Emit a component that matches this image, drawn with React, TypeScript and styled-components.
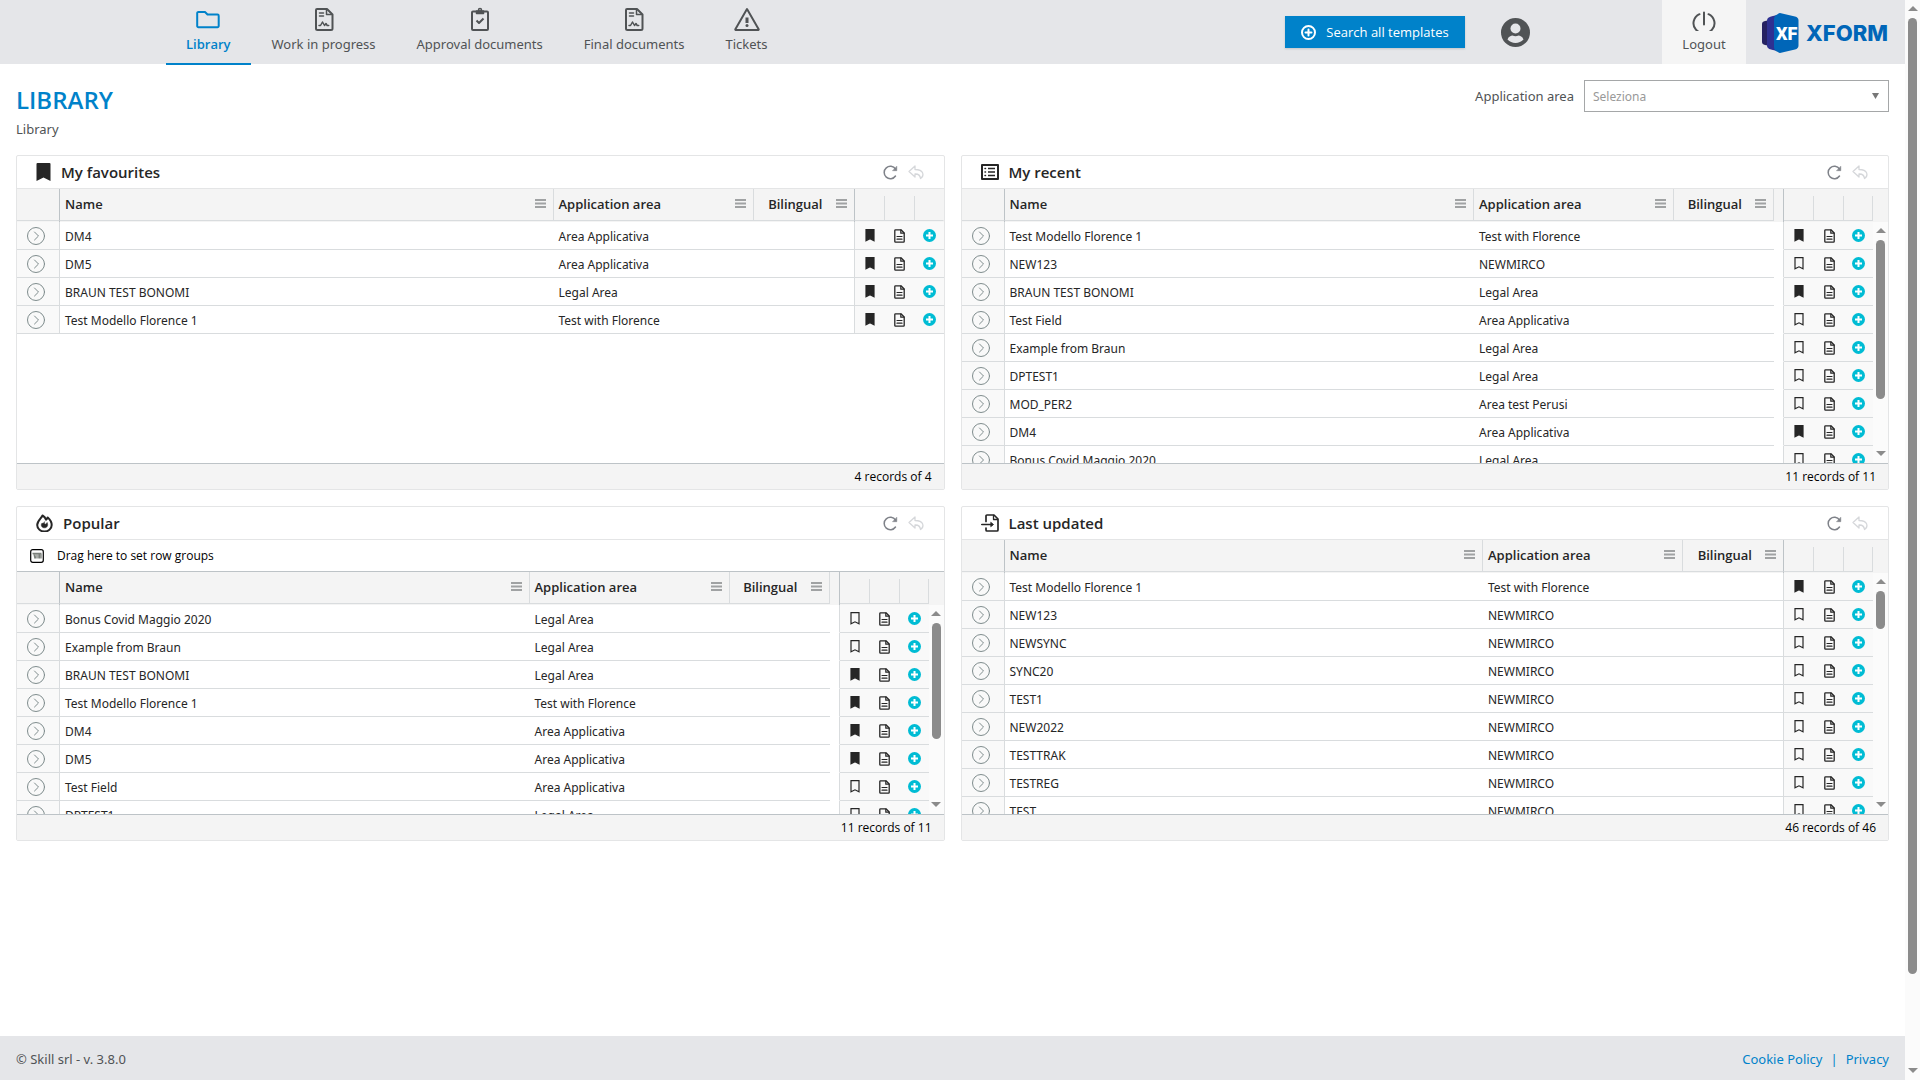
import React from "react";
import styled, { createGlobalStyle, css } from "styled-components";

const color = {
  brand: "#0082ca",
  bar: "#e5e6e9",
  text: "#262626",
  muted: "#505355",
  line: "#d9dcde",
  strong: "#bdc3c7",
  panel: "#e4e5e6",
  head: "#f4f4f4",
  pinned: "#f9f9f9",
  cyan: "#00bcd4",
  thumb: "#8b8b8b",
};

const font = {
  body: '"Noto Sans", "Open Sans", sans-serif',
  strong: '"Open Sans", "Noto Sans", sans-serif',
};

const GlobalStyle = createGlobalStyle`
  * { box-sizing: border-box; }
  body {
    margin: 0;
    background: #fff;
    color: ${color.text};
    font-family: ${font.body};
    font-size: 13px;
  }
  button, select { font: inherit; }
  svg { display: block; flex: none; }
`;

const Shell = styled.div`
  display: flex;
  min-height: 100vh;
`;

const Page = styled.div`
  flex: 1;
  min-width: 0;
  display: flex;
  flex-direction: column;
`;

const TopBar = styled.header`
  display: flex;
  height: 64px;
  padding-left: 166px;
  background: ${color.bar};
`;

const Nav = styled.nav`
  display: flex;
  gap: 1px;
`;

const BarItem = css`
  display: flex;
  flex-direction: column;
  align-items: center;
  gap: 3px;
  padding: 7px 20px 0;
  line-height: 20px;
  color: ${color.muted};
  text-decoration: none;
  white-space: nowrap;
`;

const NavLink = styled.a<{ $active?: boolean }>`
  ${BarItem}
  height: 65px;
  border-bottom: 2px solid transparent;
  ${(p) =>
    p.$active &&
    css`
      color: ${color.brand};
      font-family: ${font.strong};
      font-weight: 600;
      border-color: ${color.brand};
    `}
`;

const Tools = styled.div`
  display: flex;
  align-items: center;
  margin-left: auto;
`;

const SearchButton = styled.button`
  display: flex;
  align-items: center;
  justify-content: center;
  gap: 10px;
  width: 180px;
  height: 32px;
  padding: 0;
  border: 0;
  color: #fff;
  font-family: ${font.strong};
  background: ${color.brand};
  box-shadow: 0 1px 2px rgba(0, 0, 0, 0.15);
`;

const UserButton = styled.button`
  margin: 0 132px 0 36px;
  padding: 0;
  border: 0;
  background: none;
  color: ${color.muted};
`;

const LogoutButton = styled.button`
  ${BarItem}
  width: 84px;
  height: 64px;
  border: 0;
  background: #f5f5f5;
`;

const Brand = styled.a`
  display: flex;
  align-items: center;
  gap: 7px;
  padding: 2px 16px 0;
`;

const Main = styled.main`
  flex: 1;
  padding: 16px;
`;

const PageHead = styled.div`
  display: flex;
  justify-content: space-between;
  align-items: flex-start;
  height: 75px;
`;

const Title = styled.h1`
  margin: 2px 0 0;
  font-family: ${font.strong};
  font-size: 24px;
  line-height: 36px;
  font-weight: 600;
  color: ${color.brand};
`;

const Crumb = styled.div`
  margin-top: 1px;
  line-height: 20px;
  color: ${color.muted};
`;

const Filter = styled.div`
  display: flex;
  align-items: center;
  gap: 10px;
  color: ${color.muted};
`;

const SelectWrap = styled.div`
  display: grid;
  align-items: center;
  > * { grid-area: 1 / 1; }
  > svg { justify-self: end; margin-right: 10px; pointer-events: none; }
`;

const Select = styled.select`
  width: 305px;
  height: 32px;
  padding: 0 8px;
  border: 1px solid #a5a7a8;
  border-radius: 0;
  appearance: none;
  background: #fff;
  color: #999;
  font-size: 12px;
`;

const Panels = styled.div`
  display: grid;
  grid-template-columns: repeat(2, minmax(0, 1fr));
  gap: 16px;
`;

const Panel = styled.section`
  display: flex;
  flex-direction: column;
  height: 335px;
  border: 1px solid ${color.panel};
  border-radius: 2px;
`;

const PanelHead = styled.div`
  display: flex;
  align-items: center;
  gap: 10px;
  height: 33px;
  padding: 0 19px;
  border-bottom: 1px solid ${color.panel};
`;

const PanelTitle = styled.h2`
  flex: 1;
  margin: 0;
  font-family: ${font.strong};
  font-size: 15px;
  line-height: 20px;
  font-weight: 600;
`;

const IconButton = styled.button`
  display: flex;
  align-items: center;
  justify-content: center;
  padding: 0;
  border: 0;
  background: none;
  color: #7f8289;
  &:disabled { color: #d5d7da; }
`;

const GroupBar = styled.div`
  display: flex;
  align-items: center;
  gap: 13px;
  height: 32px;
  padding: 0 13px;
  border-bottom: 1px solid ${color.strong};
  color: #000;
  font-family: ${font.strong};
  font-size: 12px;
`;

const GridArea = styled.div`
  flex: 1;
  min-height: 0;
  display: flex;
  overflow: hidden;
`;

const Viewport = styled.div`
  flex: 1;
  min-width: 0;
  overflow: hidden;
`;

const Table = styled.table`
  width: 100%;
  table-layout: fixed;
  border-collapse: separate;
  border-spacing: 0;
  font-size: 12px;
`;

const HeadRow = styled.tr`
  height: 33px;
  background: ${color.head};
`;

const Th = styled.th<{ $pinned?: boolean }>`
  padding: 0;
  font-family: ${font.strong};
  font-weight: 600;
  font-size: 13px;
  line-height: 18px;
  text-align: left;
  vertical-align: top;
  border-right: 1px solid ${(p) => (p.$pinned ? color.strong : "transparent")};
`;

const HeadCell = styled.div<{ $end?: boolean; $open?: boolean }>`
  display: flex;
  align-items: flex-start;
  justify-content: ${(p) => (p.$end ? "flex-end" : "space-between")};
  gap: 13px;
  height: 32px;
  margin-right: -1px;
  padding: 6px 7px 0 5px;
  border-bottom: 1px solid ${color.line};
  border-right: 1px solid ${(p) => (p.$open ? "transparent" : color.line)};
  > svg { margin-top: 4px; }
`;

const ActionHead = styled.div`
  height: 32px;
  margin-right: -1px;
  padding-top: 7px;
  border-bottom: 1px solid ${color.line};
  &::after {
    content: "";
    display: block;
    height: 24px;
    border-right: 1px solid ${color.line};
  }
`;

const Td = styled.td<{ $pinned?: boolean; $edge?: boolean; $blank?: boolean }>`
  height: 28px;
  padding: 0 0 0 5px;
  line-height: 20px;
  white-space: nowrap;
  border-bottom: 1px solid ${(p) => (p.$blank ? "transparent" : color.line)};
  border-right: ${(p) => (p.$edge ? `1px solid ${color.line}` : "0")};
  background: ${(p) => (p.$pinned ? color.pinned : "#fff")};
`;

const TextCell = styled(Td)`
  padding-top: 2px;
`;

const ActionCell = styled(Td)`
  padding: 0;
`;

const CellButton = styled(IconButton)`
  margin: 0 auto;
  color: ${color.text};
`;

const Expand = styled(CellButton)`
  margin: 0 0 0 5px;
  color: #7f8c8d;
`;

const Status = styled.div`
  height: 26px;
  padding: 0 12px;
  line-height: 25px;
  font-family: ${font.strong};
  font-size: 12px;
  text-align: right;
  color: #000;
  border-top: 1px solid ${color.strong};
  background: ${color.head};
`;

const ScrollColumn = styled.div<{ $inPanel?: boolean }>`
  flex: none;
  display: flex;
  flex-direction: column;
  width: 15px;
  padding-top: ${(p) => (p.$inPanel ? "33px" : "0")};
  background: ${color.head};
`;

const Track = styled.div`
  flex: 1;
  display: flex;
  flex-direction: column;
  align-items: center;
  padding: 6px 0 7px;
  background: #fbfbfb;
  > svg:last-child { margin-top: auto; }
`;

const Thumb = styled.div<{ $size: string }>`
  width: 9px;
  height: ${(p) => p.$size};
  margin-top: 7px;
  border-radius: 5px;
  background: ${color.thumb};
`;

const Footer = styled.footer`
  display: flex;
  align-items: center;
  justify-content: space-between;
  height: 44px;
  padding: 2px 16px 0;
  background: ${color.bar};
  color: ${color.muted};
`;

const FooterLinks = styled.div`
  display: flex;
  gap: 8px;
  color: ${color.brand};
  a { color: inherit; text-decoration: none; }
`;

/* ---------- icons ---------- */

type IconProps = { w: number; h: number; children: React.ReactNode; sw?: number };

const Icon = ({ w, h, sw = 2, children }: IconProps) => (
  <svg
    width={w}
    height={h}
    viewBox={`0 0 ${w} ${h}`}
    fill="none"
    stroke="currentColor"
    strokeWidth={sw}
    strokeLinecap="round"
    strokeLinejoin="round"
    aria-hidden="true"
  >
    {children}
  </svg>
);

const FolderIcon = () => (
  <Icon w={24} h={24}>
    <path d="M2.500 5H9l2.500 2.500H21.500a1.200 1.200 0 0 1 1.200 1.200V19a1.200 1.200 0 0 1-1.200 1.200h-19A1.200 1.200 0 0 1 1.200 19V6.200A1.200 1.200 0 0 1 2.500 5z" />
  </Icon>
);
const DraftIcon = () => (
  <Icon w={24} h={24}>
    <path d="M5 2h10l5.500 5.500v14a1.500 1.500 0 0 1-1.500 1.500H5.500a1.500 1.500 0 0 1-1.500-1.500V3a1 1 0 0 1 1-1z" />
    <path d="M14.500 2.500V7.500H19.500M7.500 6h4M7.500 9h4" strokeWidth={1.500} />
    <path d="M7 18.500h1.500l2-3.500 2 3.500 1.500-2 1.200 2h1.500" strokeWidth={1.500} />
  </Icon>
);
const ClipboardIcon = () => (
  <Icon w={24} h={24}>
    <rect x="4" y="4.500" width="16" height="18.500" rx="1" />
    <path d="M8.500 4h7v2.500h-7z" fill="currentColor" strokeWidth={1.500} />
    <circle cx="12" cy="3" r="1.500" strokeWidth={1.500} />
    <path d="M8.500 13.500l2.500 2.500 4.500-4.500" strokeLinecap="butt" />
  </Icon>
);
const AlertIcon = () => (
  <Icon w={26} h={24}>
    <path d="M13 2l11.500 20a.6.600 0 0 1-.6 1H2.100a.6.600 0 0 1-.6-1z" />
    <path d="M13 10.500v5.500" strokeWidth={3} strokeLinecap="butt" />
    <path d="M13 18.500v.1" strokeWidth={3} />
  </Icon>
);
const PowerIcon = () => (
  <Icon w={24} h={24}>
    <path d="M12 4.500v12M7.500 6.200a10.500 10 0 1 0 9 0" transform="translate(0 1)" />
  </Icon>
);
const PlusRingIcon = () => (
  <Icon w={15} h={15} sw={2}>
    <circle cx="7.500" cy="7.500" r="6.500" />
    <path d="M7.500 4.500v6M4.500 7.500h6" />
  </Icon>
);
const UserIcon = () => (
  <svg width="29" height="29" viewBox="0 0 29 29" aria-hidden="true">
    <circle cx="14.500" cy="14.500" r="14.500" fill="currentColor" />
    <circle cx="14.500" cy="10.500" r="5" fill={color.bar} />
    <path d="M6.500 21.500c1-3 3.500-4 5-4 1 .5 2 .7 3 .7s2-.2 3-.7c1.500 0 4 1 5 4a11 11 0 0 1-16 0z" fill={color.bar} />
  </svg>
);
const Logo = () => (
  <>
    <svg width="37" height="40" viewBox="0 0 37 40" aria-hidden="true">
      <path d="M3 8l10-2v28L3 32q-3-.6-3-3V11q0-2.400 3-3z" fill="#262262" />
      <path d="M9 3.500L19 1v38L9 36.500q-4-1-4-4v-25q0-3 4-4z" fill="#2e3192" />
      <path d="M16 1q1-1.200 3-.8l14 3.300q3.500.8 3.500 4v25q0 3.200-3.500 4l-14 3.300q-2 .4-3-.8-4-1.500-4-5V6q0-3.500 4-5z" fill="#0066b8" />
      <text x="14" y="27" fontFamily="Roboto, sans-serif" fontWeight="900" fontSize="18" fill="#fff">XF</text>
    </svg>
    <svg width="83" height="24" viewBox="0 0 83 24" role="img" aria-label="XFORM">
      <text x="0" y="20" fontFamily="Inter, sans-serif" fontWeight="800" fontSize="22" fill="#0066b8">XFORM</text>
    </svg>
  </>
);
const Caret = () => (
  <svg width="7" height="6" viewBox="0 0 7 6" aria-hidden="true"><path d="M0 0h7L3.500 6z" fill="#777" /></svg>
);
const ArrowUp = () => (
  <svg width="10" height="5" viewBox="0 0 10 5" aria-hidden="true"><path d="M5 0l5 5H0z" fill={color.thumb} /></svg>
);
const ArrowDown = () => (
  <svg width="10" height="5" viewBox="0 0 10 5" aria-hidden="true"><path d="M5 5l5-5H0z" fill={color.thumb} /></svg>
);

const TitleBookmark = () => (
  <svg width="15" height="18" viewBox="0 0 15 18" aria-hidden="true"><path d="M1.500 0h12a1 1 0 0 1 1 1v17l-7-3.500L.500 18V1a1 1 0 0 1 1-1z" fill="currentColor" /></svg>
);
const TitleList = () => (
  <Icon w={18} h={16} sw={2}>
    <path d="M1 1h16v14H1z" />
    <path d="M4 4.500h.5M4 8h.5M4 11.500h.5" strokeWidth={1.500} />
    <path d="M7 4.500h7M7 8h7M7 11.500h7" strokeWidth={1.500} strokeLinecap="butt" />
  </Icon>
);
const TitleFire = () => (
  <Icon w={17} h={18} sw={2}>
    <path d="M6.500 1.500C5 4.500 1.200 7 1.200 11a7.200 6.500 0 0 0 14.500 0c0-3-1.700-5.500-4-7.500-.5 1-1 1.700-1.700 2.200C9.500 4 8.500 2.500 6.500 1.500z" />
    <path d="M8.500 8c-.3 1-.2 1.800.6 2.300.9-.2 1.500-.8 2-1.800 1.300 2.800.3 5.300-2.600 5.300-3.200 0-4-3-2.400-4.800.6.700 1.300.6 2.400-1z" fill="currentColor" strokeWidth={0.500} />
  </Icon>
);
const TitleImport = () => (
  <Icon w={18} h={18} sw={1.700}>
    <path d="M5 7.500V2q0-1 1-1h7l4 4v11q0 1-1 1H6q-1 0-1-1v-2" />
    <path d="M12.500 1.500V5.500H16.500" strokeWidth={1.300} />
    <path d="M.800 10.500h10.500" strokeWidth={1.700} />
    <path d="M10 8.500l2.500 2-2.500 2z" fill="currentColor" strokeWidth={0.800} />
  </Icon>
);
const RefreshIcon = () => (
  <Icon w={15} h={15} sw={1.500}>
    <path d="M12.500 4A6.200 6.200 0 1 0 12.500 11" />
    <path d="M13.800 1.500v4.200H9.800z" fill="currentColor" strokeWidth={0.500} />
  </Icon>
);
const UndoIcon = () => (
  <Icon w={17} h={15} sw={1.300}>
    <path d="M7 1L1 6.500 7 12V9c3-.2 5 .5 5.500 4.500 4-3 3.500-9-5.500-9z" />
  </Icon>
);
const GroupIcon = () => (
  <Icon w={14} h={14} sw={1.200}>
    <rect x=".7" y=".7" width="12.600" height="12.600" rx="2" />
    <path d="M2.500 4.500h9M4 5l1 4.500M6 5v4.500M8 5v4.500M9.500 5v4.500M11 5v4.500" stroke="#7b807b" strokeWidth={1.300} strokeLinecap="butt" />
  </Icon>
);
const MenuIcon = () => (
  <svg width="11" height="9" viewBox="0 0 11 9" aria-hidden="true">
    <path d="M0 0h11v2H0zM0 3.500h11v2H0zM0 7h11v2H0z" fill="#a0a2a3" />
  </svg>
);
const ExpandIcon = () => (
  <Icon w={18} h={18} sw={1}>
    <circle cx="9" cy="9" r="8.500" />
    <path d="M7.500 5l4 4-4 4" />
  </Icon>
);
const BookmarkIcon = ({ filled }: { filled?: boolean }) => (
  <svg width="10" height="13" viewBox="0 0 10 13" aria-hidden="true">
    <path
      d="M1 .7h8v11.100L5 9.800l-4 2z"
      fill={filled ? "currentColor" : "none"}
      stroke="currentColor"
      strokeWidth={1.200}
    />
  </svg>
);
const DocIcon = () => (
  <Icon w={11} h={14} sw={1.300}>
    <path d="M1.500.8H7l3.200 3.200v8.500q0 .7-.7.7h-8q-.7 0-.7-.7v-11q0-.7.7-.7z" />
    <path d="M6.800 1v3.200H10M3 7.500h5M3 10.200h5" strokeWidth={1.200} />
  </Icon>
);
const AddIcon = () => (
  <svg width="13" height="13" viewBox="0 0 13 13" aria-hidden="true">
    <circle cx="6.500" cy="6.500" r="6.500" fill={color.cyan} />
    <path d="M6.500 3v7M3 6.500h7" stroke="#fff" strokeWidth="2" />
  </svg>
);

/* ---------- data ---------- */

type Row = [name: string, area: string, favourite?: boolean];

const favourites: Row[] = [
  ["DM4", "Area Applicativa", true],
  ["DM5", "Area Applicativa", true],
  ["BRAUN TEST BONOMI", "Legal Area", true],
  ["Test Modello Florence 1", "Test with Florence", true],
];
const recent: Row[] = [
  ["Test Modello Florence 1", "Test with Florence", true],
  ["NEW123", "NEWMIRCO"],
  ["BRAUN TEST BONOMI", "Legal Area", true],
  ["Test Field", "Area Applicativa"],
  ["Example from Braun", "Legal Area"],
  ["DPTEST1", "Legal Area"],
  ["MOD_PER2", "Area test Perusi"],
  ["DM4", "Area Applicativa", true],
  ["Bonus Covid Maggio 2020", "Legal Area"],
];
const popular: Row[] = [
  ["Bonus Covid Maggio 2020", "Legal Area"],
  ["Example from Braun", "Legal Area"],
  ["BRAUN TEST BONOMI", "Legal Area", true],
  ["Test Modello Florence 1", "Test with Florence", true],
  ["DM4", "Area Applicativa", true],
  ["DM5", "Area Applicativa", true],
  ["Test Field", "Area Applicativa"],
  ["DPTEST1", "Legal Area"],
];
const updated: Row[] = [
  ["Test Modello Florence 1", "Test with Florence", true],
  ["NEW123", "NEWMIRCO"],
  ["NEWSYNC", "NEWMIRCO"],
  ["SYNC20", "NEWMIRCO"],
  ["TEST1", "NEWMIRCO"],
  ["NEW2022", "NEWMIRCO"],
  ["TESTTRAK", "NEWMIRCO"],
  ["TESTREG", "NEWMIRCO"],
  ["TEST", "NEWMIRCO"],
];

const navItems = [
  { label: "Library", icon: <FolderIcon />, active: true },
  { label: "Work in progress", icon: <DraftIcon /> },
  { label: "Approval documents", icon: <ClipboardIcon /> },
  { label: "Final documents", icon: <DraftIcon /> },
  { label: "Tickets", icon: <AlertIcon /> },
];

/* ---------- parts ---------- */

const Scrollbar = ({ size, inPanel }: { size: string; inPanel?: boolean }) => (
  <ScrollColumn $inPanel={inPanel} aria-hidden="true">
    <Track>
      <ArrowUp />
      <Thumb $size={size} />
      <ArrowDown />
    </Track>
  </ScrollColumn>
);

type PanelProps = {
  title: string;
  icon: React.ReactNode;
  rows: Row[];
  status: string;
  thumb?: string;
  spacer?: boolean;
  groupBar?: boolean;
};

const TemplatePanel = ({ title, icon, rows, status, thumb, spacer, groupBar }: PanelProps) => (
  <Panel aria-label={title}>
    <PanelHead>
      {icon}
      <PanelTitle>{title}</PanelTitle>
      <IconButton aria-label="Refresh"><RefreshIcon /></IconButton>
      <IconButton aria-label="Undo" disabled><UndoIcon /></IconButton>
    </PanelHead>
    {groupBar && (
      <GroupBar>
        <GroupIcon />
        Drag here to set row groups
      </GroupBar>
    )}
    <GridArea>
      <Viewport>
        <Table>
          <colgroup>
            <col width={43} />
            <col />
            <col width={200} />
            <col width={spacer ? 100 : 101} />
            {spacer && <col width={10} />}
            <col width={30} />
            <col width={30} />
            <col width={29} />
          </colgroup>
          <thead>
            <HeadRow>
              <Th $pinned><HeadCell $open /></Th>
              <Th><HeadCell>Name<MenuIcon /></HeadCell></Th>
              <Th><HeadCell>Application area<MenuIcon /></HeadCell></Th>
              <Th $pinned={!spacer}><HeadCell $end $open={!spacer}>Bilingual<MenuIcon /></HeadCell></Th>
              {spacer && <Th $pinned />}
              <Th><ActionHead /></Th>
              <Th><ActionHead /></Th>
              <Th>{thumb ? <ActionHead /> : <HeadCell $open />}</Th>
            </HeadRow>
          </thead>
          <tbody>
            {rows.map(([name, area, favourite]) => (
              <tr key={name}>
                <Td $pinned $edge><Expand aria-label={`Expand ${name}`}><ExpandIcon /></Expand></Td>
                <TextCell>{name}</TextCell>
                <TextCell>{area}</TextCell>
                <Td $edge={!spacer} />
                {spacer && <Td $edge $blank />}
                <ActionCell $pinned><CellButton aria-label="Favourite"><BookmarkIcon filled={favourite} /></CellButton></ActionCell>
                <ActionCell $pinned><CellButton aria-label="Details"><DocIcon /></CellButton></ActionCell>
                <ActionCell $pinned><CellButton aria-label="New document"><AddIcon /></CellButton></ActionCell>
              </tr>
            ))}
          </tbody>
        </Table>
      </Viewport>
      {thumb && <Scrollbar size={thumb} inPanel />}
    </GridArea>
    <Status>{status}</Status>
  </Panel>
);

export default function App() {
  return (
    <>
      <GlobalStyle />
      <Shell>
        <Page>
          <TopBar>
            <Nav>
              {navItems.map((item) => (
                <NavLink key={item.label} href="#" $active={item.active}>
                  {item.icon}
                  {item.label}
                </NavLink>
              ))}
            </Nav>
            <Tools>
              <SearchButton><PlusRingIcon />Search all templates</SearchButton>
              <UserButton aria-label="Account"><UserIcon /></UserButton>
              <LogoutButton><PowerIcon />Logout</LogoutButton>
              <Brand href="#" aria-label="XFORM home"><Logo /></Brand>
            </Tools>
          </TopBar>
          <Main>
            <PageHead>
              <div>
                <Title>LIBRARY</Title>
                <Crumb>Library</Crumb>
              </div>
              <Filter>
                <label htmlFor="area">Application area</label>
                <SelectWrap>
                  <Select id="area" defaultValue="">
                    <option value="">Seleziona</option>
                  </Select>
                  <Caret />
                </SelectWrap>
              </Filter>
            </PageHead>
            <Panels>
              <TemplatePanel title="My favourites" icon={<TitleBookmark />} rows={favourites} status="4 records of 4" />
              <TemplatePanel title="My recent" icon={<TitleList />} rows={recent} status="11 records of 11" thumb="159px" spacer />
              <TemplatePanel title="Popular" icon={<TitleFire />} rows={popular} status="11 records of 11" thumb="116px" spacer groupBar />
              <TemplatePanel title="Last updated" icon={<TitleImport />} rows={updated} status="46 records of 46" thumb="38px" />
            </Panels>
          </Main>
          <Footer>
            <span>© Skill srl - v. 3.8.0</span>
            <FooterLinks>
              <a href="#">Cookie Policy</a>
              <span>|</span>
              <a href="#">Privacy</a>
            </FooterLinks>
          </Footer>
        </Page>
        <Scrollbar size="956px" />
      </Shell>
    </>
  );
}
